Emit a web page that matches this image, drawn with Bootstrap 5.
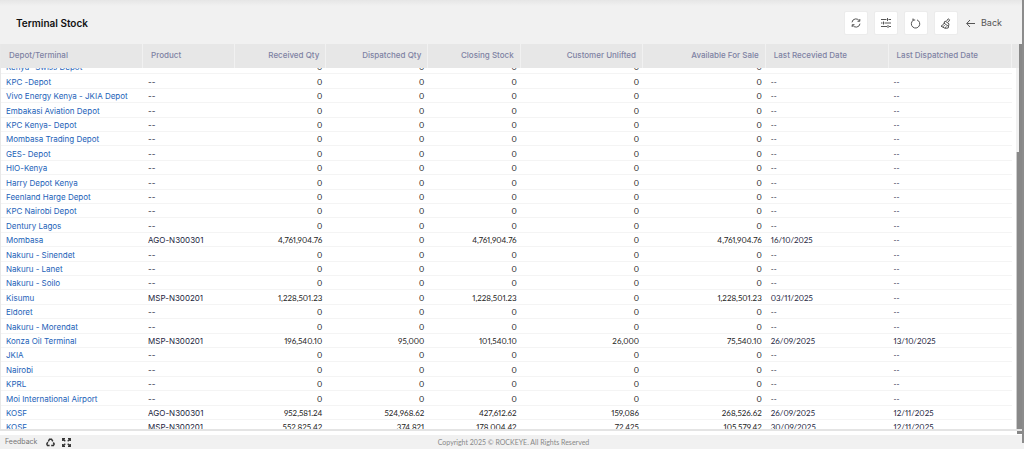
<!DOCTYPE html>
<html lang="en">
<head>
<meta charset="utf-8">
<meta name="viewport" content="width=device-width, initial-scale=1">
<title>Terminal Stock</title>
<link href="https://cdn.jsdelivr.net/npm/bootstrap@5.3.0/dist/css/bootstrap.min.css" rel="stylesheet">
<script src="https://cdn.jsdelivr.net/npm/bootstrap@5.3.0/dist/js/bootstrap.bundle.min.js" defer></script>
<style>
body{font-family:Inter,"Liberation Sans",sans-serif;font-size:8px;line-height:14px;background:#f1f1f1;color:#1c2540}
.topbar{height:44px;padding-top:2px;padding-right:20px;background:linear-gradient(#e6e6e6,#f1f1f1 6px)}
.topbar h1{font-size:10px;line-height:16px;color:#111;font-weight:600}
.tools{gap:6px}
.tool{width:24px;height:24px;background:#fff;border:1px solid #ececec;border-radius:2px;color:#555}
.tool svg,.back svg,.foot-icon svg{display:block;margin:auto;fill:none;stroke:currentColor}
.back{font-size:9px;color:#555;gap:6px;margin-left:2px}
.window-rail{width:2px;margin-bottom:6px;background:#8c8c8c}
.stock-view{overflow:hidden;background:#fff;border-left:1px solid #e8e8e8}
.stock{table-layout:fixed;border-collapse:separate;border-spacing:0}
.stock th{position:sticky;top:0;z-index:1;height:24px;padding:0 7px 2px 8px;background:#e7e7e7;border-right:1px solid #f1f1f1;color:#7e82a3;font-weight:500;white-space:nowrap}
.stock th.end{padding-right:6px}
.stock th:last-child{border:0}
.stock td{height:14px;padding:1px 5px 0;border-bottom:1px solid #f4f4f4;line-height:12px;white-space:nowrap}
.stock tr:nth-child(5n+2) td,.stock tr:nth-child(5n+4) td{height:15px}
.stock td:last-child{border:0}
.stock a{color:#1c62b8;text-decoration:none}
.stock .end{text-align:right}
.stock td.end{padding-right:4px;color:#222}
.stock td.end,.stock td.date{font-family:Lato,sans-serif;font-feature-settings:"pnum"}
.rail{width:6px;background:#888}
.rail-head{height:24px;margin-right:3px;background:#e7e7e7}
.rail-track{height:84px;margin-right:3px;background:#f1f1f1}
.rail-thumb{border-left:1px solid #ccc}
.cross-rail{height:2px;background:#e4e4e4}
.under{height:4px;background:#fff}
.under-end{width:5px;height:3px;background:#888}
footer{height:14px;padding-left:5px;color:#888;font-size:7px}
footer a{color:#777;text-decoration:none}
.copyright{font-family:Lato,sans-serif}
.foot-icons{gap:6px;margin-left:8px}
.foot-icon{width:10px;height:10px;border:0;background:none;color:#333}
</style>
</head>
<body class="vh-100 d-flex overflow-hidden">
<div class="d-flex flex-column flex-fill overflow-hidden">
<header class="topbar d-flex align-items-center justify-content-between ps-3 flex-shrink-0">
<h1 class="m-0">Terminal Stock</h1>
<div class="tools d-flex align-items-center">
<button class="tool p-0" type="button" aria-label="Refresh"><svg width="10" height="10" viewBox="0 0 10 10"><path d="M1 4.3A4 4 0 0 1 8.500 3M9 5.700A4 4 0 0 1 1.500 7M8.800 1v2.300H6.500M1.200 9V6.700h2.300"/></svg></button>
<button class="tool p-0" type="button" aria-label="Filter settings"><svg width="12" height="10" viewBox="0 0 12 10"><path d="M1 1.500h5.500M8.500 1.500H11M1 5h1.500M4.500 5H11M1 8.500h6M9 8.500h2M7.500 0v3M3.500 3.500v3M8 7v3"/></svg></button>
<button class="tool p-0" type="button" aria-label="Reset"><svg width="11" height="11" viewBox="0 0 11 11"><path d="M3 2.500A4.200 4.200 0 1 0 7 1.900M5.200 2H2.800M3 .5v2.300"/></svg></button>
<button class="tool p-0" type="button" aria-label="Clear"><svg width="11" height="11" viewBox="0 0 11 11"><path d="M6.500 3.200 8.200.8l1.500 1.100-1.600 2.400M5 3l4 2.800-.8 4.200-3.200.3L1 8.200 3.800 6zM3.800 5l4.200 3M3 8.800l1.600-1.600M5 9.800l1.500-1.400"/></svg></button>
<button class="back d-flex align-items-center border-0 bg-transparent p-0" type="button"><svg width="9" height="9" viewBox="0 0 9 9"><path d="M9 4.500H.8M4 1 .7 4.500 4 8"/></svg><span>Back</span></button>
</div>
</header>
<main class="d-flex flex-fill overflow-hidden">
<div class="stock-view flex-fill" id="stockView">
<table class="stock w-100">
<colgroup><col style="width:14%"><col style="width:9.1%"><col style="width:8.95%"><col style="width:10.05%"><col style="width:9.1%"><col style="width:12.05%"><col style="width:12.1%"><col style="width:12.1%"><col style="width:12.15%"><col></colgroup>
<thead><tr><th>Depot/Terminal</th><th>Product</th><th class="end">Received Qty</th><th class="end">Dispatched Qty</th><th class="end">Closing Stock</th><th class="end">Customer Unlifted</th><th class="end">Available For Sale</th><th>Last Recevied Date</th><th>Last Dispatched Date</th><th class="p-0"></th></tr></thead>
<tbody id="stockRows"></tbody>
</table>
</div>
<div class="rail d-flex flex-column flex-shrink-0"><div class="rail-head"></div><div class="rail-track"></div><div class="rail-thumb flex-fill"></div></div>
</main>
<div class="cross-rail flex-shrink-0"></div>
<div class="under d-flex justify-content-end flex-shrink-0"><div class="under-end"></div></div>
<footer class="row g-0 align-items-center flex-shrink-0">
<div class="col d-flex align-items-center"><a href="#">Feedback</a>
<div class="foot-icons d-flex">
<button class="foot-icon p-0" type="button" aria-label="Recycle"><svg width="9" height="9" viewBox="0 0 9 9" stroke-width="1.500"><path d="M2.300 3.500 3.500 1.200h2L6.800 3.400M7.300 4.500l.9 1.500-.8 1.500H5.200M3.600 7.500H1.500L.8 6l1-1.800"/></svg></button>
<button class="foot-icon p-0" type="button" aria-label="Full screen"><svg width="9" height="9" viewBox="0 0 9 9" stroke-width="1.300"><path d="M.7 3V.7H3M.7.7l2.600 2.600M6 .7h2.300V3M8.300.7 5.700 3.300M.7 6v2.300H3M.7 8.300l2.600-2.600M6 8.300h2.300V6M8.300 8.300 5.700 5.700"/></svg></button>
</div></div>
<div class="copyright col-auto">Copyright 2025 © ROCKEYE. All Rights Reserved</div>
<div class="col"></div>
</footer>
</div>
<div class="window-rail flex-shrink-0"></div>
<script>
const none = '--';
const rows = [
['Kenya -Swiss Depot'],['KPC -Depot'],['Vivo Energy Kenya - JKIA Depot'],['Embakasi Aviation Depot'],['KPC Kenya- Depot'],['Mombasa Trading Depot'],['GES- Depot'],['HIO-Kenya'],['Harry Depot Kenya'],['Feenland Harge Depot'],['KPC Nairobi Depot'],['Dentury Lagos'],
['Mombasa','AGO-N300301','4,761,904.76','0','4,761,904.76','0','4,761,904.76','16/10/2025',none],
['Nakuru - Sinendet'],['Nakuru - Lanet'],['Nakuru - Soilo'],
['Kisumu','MSP-N300201','1,228,501.23','0','1,228,501.23','0','1,228,501.23','03/11/2025',none],
['Eldoret'],['Nakuru - Morendat'],
['Konza Oil Terminal','MSP-N300201','196,540.10','95,000','101,540.10','26,000','75,540.10','26/09/2025','13/10/2025'],
['JKIA'],['Nairobi'],['KPRL'],['Moi International Airport'],
['KOSF','AGO-N300301','952,581.24','524,968.62','427,612.62','159,086','268,526.62','26/09/2025','12/11/2025'],
['KOSF','MSP-N300201','552,825.42','374,821','178,004.42','72,425','105,579.42','30/09/2025','12/11/2025']];
document.getElementById('stockRows').innerHTML = rows.map(r => {
  const v = r.length > 1 ? r : [r[0], none, '0', '0', '0', '0', '0', none, none];
  return '<tr>' + v.map((t, i) => i === 0 ? `<td><a href="#">${t}</a></td>` : `<td class="${i > 1 && i < 7 ? 'end' : i > 6 ? 'date' : ''}">${t}</td>`).join('') + '<td></td></tr>';
}).join('');
document.getElementById('stockView').scrollTop = 8;
</script>
</body>
</html>
